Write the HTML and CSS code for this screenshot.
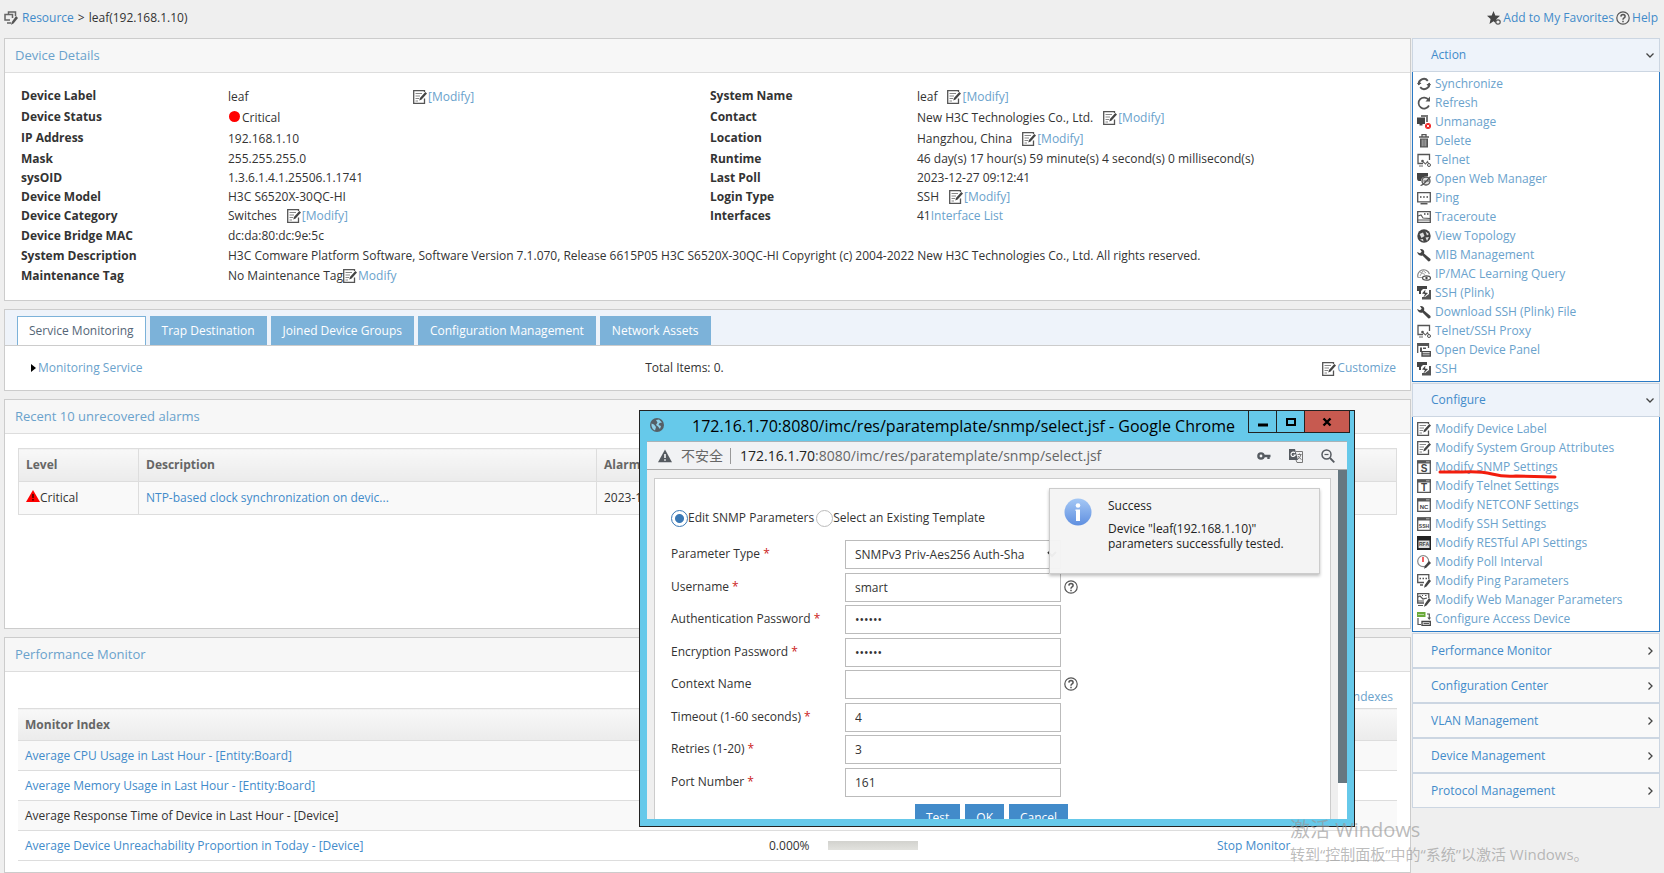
FILE: index.html
```html
<!DOCTYPE html>
<html lang="en">
<head>
    <meta charset="UTF-8">
    <meta name="viewport" content="width=device-width, initial-scale=1.0">
    <title>leaf(192.168.1.10)</title>
    <link rel="stylesheet" href="styles.css">
</head>
<body>
    <!-- icon sprite -->
    <svg class="sprite" aria-hidden="true">
        <symbol id="i-edit" viewBox="0 0 14 14">
            <path d="M11.5 8.5V13.3H.7V.7H11.5V2" fill="#fff" stroke="#555" stroke-width="1.3"/>
            <path d="M2.5 3.5H9M2.5 6H7M2.5 8.5H6M2.5 11H5" stroke="#888" stroke-width="1"/>
            <path d="M12.3 2L14 3.600L8.600 9.500L6.300 10.500L6.900 8Z" fill="#444"/>
        </symbol>
        <symbol id="i-res" viewBox="0 0 14 14">
            <path d="M4.500 3V1H11.500V5M6 9H1V3.500H8.500V7M3 12H7" fill="none" stroke="#666" stroke-width="1.500"/>
            <path d="M12 5L14 7L9.500 12.500L7 13.700L7.800 11Z" fill="#555"/>
        </symbol>
        <symbol id="i-star" viewBox="0 0 14 14">
            <path d="M6.500 0L8.300 4.400L13 4.800L9.500 8L8.500 12L6.500 10.300L2.500 13L3.600 8L0 4.800L4.700 4.400Z" fill="#444"/>
            <circle cx="11" cy="11" r="2.200" fill="#efefef" stroke="#555" stroke-width="1.200"/>
        </symbol>
        <symbol id="i-help" viewBox="0 0 14 14">
            <circle cx="7" cy="7" r="6.200" fill="none" stroke="#555" stroke-width="1.200"/>
            <path d="M4.900 5.600Q5 3.600 7 3.600Q9.100 3.700 9.100 5.400Q9 6.600 7.800 7.200Q7 7.700 7 8.700M7 9.800V11.200" fill="none" stroke="#555" stroke-width="1.500"/>
        </symbol>
        <symbol id="i-sync" viewBox="0 0 14 14">
            <path d="M2 8A5 5 0 0 1 10.800 3.800M12 6A5 5 0 0 1 3.200 10.200" fill="none" stroke="#555" stroke-width="1.900"/>
            <path d="M0 7H4.500L2 4ZM9.500 7H14L12 10.500Z" fill="#555"/>
        </symbol>
        <symbol id="i-refresh" viewBox="0 0 14 14">
            <path d="M11.500 3.800A5.500 5.500 0 1 0 12 9.500" fill="none" stroke="#555" stroke-width="1.700"/>
            <path d="M13 .5V5.500H8.500Z" fill="#555"/>
        </symbol>
        <symbol id="i-unmanage" viewBox="0 0 14 14">
            <path d="M4 2V0H11V7H9V2Z" fill="#777"/>
            <path d="M0 2.500H8V9H5.500V10.500H2.500V9H0Z" fill="#444"/>
            <circle cx="11" cy="11" r="3" fill="#e22"/>
            <path d="M9.800 9.800L12.200 12.200M12.200 9.800L9.800 12.200" stroke="#fff" stroke-width=".9"/>
        </symbol>
        <symbol id="i-delete" viewBox="0 0 14 14">
            <path d="M2 3H12M5 2.500V.7H9V2.500" fill="none" stroke="#555" stroke-width="1.300"/>
            <path d="M3 4.500H11V13.500H3Z" fill="#555"/>
            <path d="M5.200 5.500V12.300M7 5.500V12.300M8.800 5.500V12.300" stroke="#ddd" stroke-width=".7"/>
        </symbol>
        <symbol id="i-telnet" viewBox="0 0 14 14">
            <path d="M6 10.500H1V1.500H12.500V7" fill="none" stroke="#555" stroke-width="1.300"/>
            <path d="M2 13H6M5 8L8.500 11L10.500 8.500L12 11.500" fill="none" stroke="#666" stroke-width="1.100"/>
            <circle cx="5.500" cy="8" r="1.300" fill="#555"/>
            <circle cx="12" cy="12" r="1.500" fill="#fff" stroke="#555"/>
        </symbol>
        <symbol id="i-web" viewBox="0 0 14 14">
            <path d="M0 1H11V4Q4 4.500 4 9H2Q0 9 0 6Z" fill="#444"/>
            <circle cx="9" cy="9" r="4" fill="#ddd" stroke="#555" stroke-width="1.300"/>
            <path d="M3.500 13.500Q6 13.500 13.500 4.500M6.500 9H12" fill="none" stroke="#555" stroke-width="1.200"/>
        </symbol>
        <symbol id="i-ping" viewBox="0 0 14 14">
            <path d="M.7 1.700H13.300V10.800H.7Z" fill="#fff" stroke="#555" stroke-width="1.300"/>
            <path d="M3 6H4.500M6.200 6H7.700M9.500 6H11" stroke="#444" stroke-width="1.500"/>
            <path d="M3.500 12.700H10.500" stroke="#555" stroke-width="1.500"/>
        </symbol>
        <symbol id="i-trace" viewBox="0 0 14 14">
            <path d="M.7 1.700H13.300V12.300H.7Z" fill="#fff" stroke="#555" stroke-width="1.300"/>
            <path d="M1 6L4 5L6 8L13 8.500M1 10H13" fill="none" stroke="#555" stroke-width="1.100"/>
            <path d="M7 4H8.500M10 4H11.500" stroke="#444" stroke-width="1.500"/>
        </symbol>
        <symbol id="i-topo" viewBox="0 0 14 14">
            <circle cx="7" cy="7" r="6.700" fill="#444"/>
            <path d="M2.500 5L6 3.500L7.500 7L4.500 9ZM8.500 2.500L12 5L10 6.500ZM8.500 8.500L12 8L10 12ZM3 10.500L6 10L6.500 12.500Z" fill="#ddd"/>
        </symbol>
        <symbol id="i-wrench" viewBox="0 0 14 14">
            <path d="M3 1Q6.500 .5 7.300 3.700L7 5.500L13.500 11Q14 13.500 11.500 13.500L5.500 7.500Q1.500 8.500 0 4L3 5.300L4.700 3.800Z" fill="#444"/>
        </symbol>
        <symbol id="i-query" viewBox="0 0 14 14">
            <path d="M1 10.500A5.700 5.700 0 1 1 12.400 7" fill="none" stroke="#888" stroke-width="1.200"/>
            <path d="M3 9L6 3.500L9 6M3 5L8 7.500M1 10.500H5" fill="none" stroke="#999" stroke-width=".9"/>
            <ellipse cx="9.500" cy="11" rx="4" ry="2.200" fill="#fff" stroke="#555" stroke-width="1.200"/>
            <circle cx="9.500" cy="11" r="1.200" fill="#444"/>
        </symbol>
        <symbol id="i-ssh" viewBox="0 0 14 14">
            <path d="M0 0H10V3H6L4 5V8H2V5H0Z" fill="#444"/>
            <path d="M12 4H14V13.500H5V11H8L12 8Z" fill="#555"/>
            <path d="M8.500 3.500L5 7.500L8 8L6 12L11 7L8 6.500Z" fill="#444"/>
        </symbol>
        <symbol id="i-panel" viewBox="0 0 14 14">
            <path d="M.7 10V.7H11.500V5" fill="none" stroke="#555" stroke-width="1.300"/>
            <path d="M1 1H11V3H1ZM3 4.500H5V9H3ZM6 4.500H9V6H6Z" fill="#555"/>
            <path d="M5 8.700H13.300V13H5ZM5 10.800H13" fill="#fff" stroke="#444" stroke-width="1.300"/>
        </symbol>
        <symbol id="i-frame" viewBox="0 0 14 14">
            <path d="M.7 1V13.300H13.300V1Z" fill="#fff" stroke="#555" stroke-width="1.300"/>
            <path d="M0 .5H14V3.500H0Z" fill="#555"/>
            <path d="M9 1.800H12.500" stroke="#ccc" stroke-width=".8"/>
        </symbol>
        <symbol id="i-poll" viewBox="0 0 14 14">
            <circle cx="6.200" cy="6.200" r="5.500" fill="#fff" stroke="#888" stroke-width="1.200"/>
            <path d="M6 2V7" stroke="#e22" stroke-width="1.400"/>
            <path d="M12 6L14 8L9.500 12.500L7 13.700L7.800 11Z" fill="#444"/>
        </symbol>
        <symbol id="i-pinged" viewBox="0 0 14 14">
            <path d="M7 8.500H.7V.7H11.800V5" fill="none" stroke="#555" stroke-width="1.300"/>
            <path d="M2.500 4.500H4M5.500 4.500H7M8.500 4.500H10M3 11H6" stroke="#555" stroke-width="1.400"/>
            <path d="M12 5L14 7L9.500 12.500L7 13.700L7.800 11Z" fill="#444"/>
        </symbol>
        <symbol id="i-webed" viewBox="0 0 14 14">
            <path d="M7 10H.7V.7H11.800V5" fill="none" stroke="#555" stroke-width="1.300"/>
            <path d="M1 4L3 3L6 6L10 5M5 2.500H6M8 2.500H9.500M1 8H7M1 12.500H6" fill="none" stroke="#555" stroke-width="1.200"/>
            <path d="M12 5L14 7L9.500 12.500L7 13.700L7.800 11Z" fill="#444"/>
        </symbol>
        <symbol id="i-access" viewBox="0 0 14 14">
            <path d="M0 0H8.500V5H0Z" fill="#6aaa3a"/>
            <path d="M1.500 2.500H7" stroke="#fff" stroke-dasharray="1 1"/>
            <path d="M1 6V12.500H4M10 2H12.300V7" fill="none" stroke="#555" stroke-width="1.200"/>
            <path d="M10.300 5.500H14L12.300 8Z" fill="#555"/>
            <path d="M5 9.500H13.300V13.300H5Z" fill="#fff" stroke="#444" stroke-width="1.300"/>
            <path d="M6.500 11.500H12" stroke="#555" stroke-width="1.200"/>
        </symbol>
        <symbol id="i-down" viewBox="0 0 10 10"><path d="M1.500 3.500L5 7L8.500 3.500" fill="none" stroke="#444" stroke-width="1.300"/></symbol>
        <symbol id="i-right" viewBox="0 0 10 10"><path d="M3.500 1.500L7 5L3.500 8.500" fill="none" stroke="#444" stroke-width="1.300"/></symbol>
    </svg>

    <header class="topbar">
        <nav class="crumbs">
            <svg class="icon"><use href="#i-res"/></svg>
            <a href="#">Resource</a> <span>&gt;</span> <span>leaf(192.168.1.10)</span>
        </nav>
        <div class="toplinks">
            <a href="#"><svg class="icon"><use href="#i-star"/></svg>Add to My Favorites</a>
            <a href="#"><svg class="icon"><use href="#i-help"/></svg>Help</a>
        </div>
    </header>

    <div class="layout">
        <main class="main">
            <section class="panel">
                <h2 class="panel-title">Device Details</h2>
                <div class="details">
                    <dl class="props">
                        <dt>Device Label</dt><dd><span class="label-value">leaf</span><a href="#"><svg class="icon"><use href="#i-edit"/></svg>[Modify]</a></dd>
                        <dt>Device Status</dt><dd><span class="dot"></span>Critical</dd>
                        <dt>IP Address</dt><dd>192.168.1.10</dd>
                        <dt>Mask</dt><dd>255.255.255.0</dd>
                        <dt>sysOID</dt><dd>1.3.6.1.4.1.25506.1.1741</dd>
                        <dt>Device Model</dt><dd>H3C S6520X-30QC-HI</dd>
                        <dt>Device Category</dt><dd><span class="value">Switches</span><a href="#"><svg class="icon"><use href="#i-edit"/></svg>[Modify]</a></dd>
                        <dt>Device Bridge MAC</dt><dd>dc:da:80:dc:9e:5c</dd>
                        <dt>System Description</dt><dd>H3C Comware Platform Software, Software Version 7.1.070, Release 6615P05 H3C S6520X-30QC-HI Copyright (c) 2004-2022 New H3C Technologies Co., Ltd. All rights reserved.</dd>
                        <dt>Maintenance Tag</dt><dd>No Maintenance Tag<a href="#"><svg class="icon"><use href="#i-edit"/></svg>Modify</a></dd>
                    </dl>
                    <dl class="props">
                        <dt>System Name</dt><dd><span class="value">leaf</span><a href="#"><svg class="icon"><use href="#i-edit"/></svg>[Modify]</a></dd>
                        <dt>Contact</dt><dd><span class="value">New H3C Technologies Co., Ltd.</span><a href="#"><svg class="icon"><use href="#i-edit"/></svg>[Modify]</a></dd>
                        <dt>Location</dt><dd><span class="value">Hangzhou, China</span><a href="#"><svg class="icon"><use href="#i-edit"/></svg>[Modify]</a></dd>
                        <dt>Runtime</dt><dd>46 day(s) 17 hour(s) 59 minute(s) 4 second(s) 0 millisecond(s)</dd>
                        <dt>Last Poll</dt><dd>2023-12-27 09:12:41</dd>
                        <dt>Login Type</dt><dd><span class="value">SSH</span><a href="#"><svg class="icon"><use href="#i-edit"/></svg>[Modify]</a></dd>
                        <dt>Interfaces</dt><dd>41<a href="#">Interface List</a></dd>
                    </dl>
                </div>
            </section>

            <section class="panel">
                <div class="tabs">
                    <button class="tab active" type="button">Service Monitoring</button>
                    <button class="tab" type="button">Trap Destination</button>
                    <button class="tab" type="button">Joined Device Groups</button>
                    <button class="tab" type="button">Configuration Management</button>
                    <button class="tab" type="button">Network Assets</button>
                </div>
                <div class="service">
                    <a href="#"><span class="caret"></span>Monitoring Service</a>
                    <span>Total Items: 0.</span>
                    <a href="#"><svg class="icon"><use href="#i-edit"/></svg>Customize</a>
                </div>
            </section>

            <section class="panel alarms">
                <h2 class="panel-title">Recent 10 unrecovered alarms</h2>
                <table class="grid alarm-grid">
                    <thead>
                        <tr><th class="col-level">Level</th><th class="col-desc">Description</th><th>Alarmed At</th></tr>
                    </thead>
                    <tbody>
                        <tr>
                            <td><svg class="warn" viewBox="0 0 14 12"><path d="M7 0L14 12H0Z" fill="#f00"/><path d="M7 4V8M7 9V10.500" stroke="#400" stroke-width="1.500"/></svg>Critical</td>
                            <td><a href="#">NTP-based clock synchronization on devic...</a></td>
                            <td>2023-12-27</td>
                        </tr>
                    </tbody>
                </table>
            </section>

            <section class="panel monitor">
                <h2 class="panel-title">Performance Monitor</h2>
                <div class="monitor-tools"><a href="#">Add Indexes</a></div>
                <table class="grid">
                    <thead>
                        <tr><th class="col-index">Monitor Index</th><th class="col-value"></th><th></th><th class="col-op"></th></tr>
                    </thead>
                    <tbody>
                        <tr><td><a href="#">Average CPU Usage in Last Hour - [Entity:Board]</a></td><td></td><td></td><td></td></tr>
                        <tr><td><a href="#">Average Memory Usage in Last Hour - [Entity:Board]</a></td><td></td><td></td><td></td></tr>
                        <tr><td>Average Response Time of Device in Last Hour - [Device]</td><td></td><td></td><td></td></tr>
                        <tr><td><a href="#">Average Device Unreachability Proportion in Today - [Device]</a></td><td>0.000%</td><td><div class="bar"></div></td><td><a href="#">Stop Monitor</a></td></tr>
                    </tbody>
                </table>
            </section>
        </main>

        <aside class="side">
            <section class="menu">
                <button class="menu-head open" type="button">Action<svg class="arrow"><use href="#i-down"/></svg></button>
                <ul class="menu-list">
                    <li><a href="#"><svg class="icon"><use href="#i-sync"/></svg>Synchronize</a></li>
                    <li><a href="#"><svg class="icon"><use href="#i-refresh"/></svg>Refresh</a></li>
                    <li><a href="#"><svg class="icon"><use href="#i-unmanage"/></svg>Unmanage</a></li>
                    <li><a href="#"><svg class="icon"><use href="#i-delete"/></svg>Delete</a></li>
                    <li><a href="#"><svg class="icon"><use href="#i-telnet"/></svg>Telnet</a></li>
                    <li><a href="#"><svg class="icon"><use href="#i-web"/></svg>Open Web Manager</a></li>
                    <li><a href="#"><svg class="icon"><use href="#i-ping"/></svg>Ping</a></li>
                    <li><a href="#"><svg class="icon"><use href="#i-trace"/></svg>Traceroute</a></li>
                    <li><a href="#"><svg class="icon"><use href="#i-topo"/></svg>View Topology</a></li>
                    <li><a href="#"><svg class="icon"><use href="#i-wrench"/></svg>MIB Management</a></li>
                    <li><a href="#"><svg class="icon"><use href="#i-query"/></svg>IP/MAC Learning Query</a></li>
                    <li><a href="#"><svg class="icon"><use href="#i-ssh"/></svg>SSH (Plink)</a></li>
                    <li><a href="#"><svg class="icon"><use href="#i-wrench"/></svg>Download SSH (Plink) File</a></li>
                    <li><a href="#"><svg class="icon"><use href="#i-telnet"/></svg>Telnet/SSH Proxy</a></li>
                    <li><a href="#"><svg class="icon"><use href="#i-panel"/></svg>Open Device Panel</a></li>
                    <li><a href="#"><svg class="icon"><use href="#i-ssh"/></svg>SSH</a></li>
                </ul>
            </section>
            <section class="menu">
                <button class="menu-head open" type="button">Configure<svg class="arrow"><use href="#i-down"/></svg></button>
                <ul class="menu-list">
                    <li><a href="#"><svg class="icon"><use href="#i-edit"/></svg>Modify Device Label</a></li>
                    <li><a href="#"><svg class="icon"><use href="#i-edit"/></svg>Modify System Group Attributes</a></li>
                    <li class="marked">
                        <a href="#"><svg class="icon" viewBox="0 0 14 14"><use href="#i-frame"/><text class="glyph" x="7" y="12" font-size="10">S</text></svg>Modify SNMP Settings</a>
                        <svg class="mark" viewBox="0 0 120 10"><path d="M2 3H24Q42 2 54 5T78 7L117 8" fill="none" stroke="#f21d0d" stroke-width="3" stroke-linecap="round"/></svg>
                    </li>
                    <li><a href="#"><svg class="icon" viewBox="0 0 14 14"><use href="#i-frame"/><text class="glyph" x="7" y="12" font-size="10">T</text></svg>Modify Telnet Settings</a></li>
                    <li><a href="#"><svg class="icon" viewBox="0 0 14 14"><use href="#i-frame"/><text class="glyph" x="7" y="11" font-size="6">NC</text></svg>Modify NETCONF Settings</a></li>
                    <li><a href="#"><svg class="icon" viewBox="0 0 14 14"><use href="#i-frame"/><text class="glyph" x="7" y="11" font-size="5">SSH</text></svg>Modify SSH Settings</a></li>
                    <li><a href="#"><svg class="icon" viewBox="0 0 14 14"><path d="M0 0H14V14H0Z" fill="#222"/><path d="M1.500 4.500H12.500V12H1.500Z" fill="#ddd"/><text class="glyph" x="7" y="10" font-size="5">RFA</text></svg>Modify RESTful API Settings</a></li>
                    <li><a href="#"><svg class="icon"><use href="#i-poll"/></svg>Modify Poll Interval</a></li>
                    <li><a href="#"><svg class="icon"><use href="#i-pinged"/></svg>Modify Ping Parameters</a></li>
                    <li><a href="#"><svg class="icon"><use href="#i-webed"/></svg>Modify Web Manager Parameters</a></li>
                    <li><a href="#"><svg class="icon"><use href="#i-access"/></svg>Configure Access Device</a></li>
                </ul>
            </section>
            <button class="menu-head" type="button">Performance Monitor<svg class="arrow"><use href="#i-right"/></svg></button>
            <button class="menu-head" type="button">Configuration Center<svg class="arrow"><use href="#i-right"/></svg></button>
            <button class="menu-head" type="button">VLAN Management<svg class="arrow"><use href="#i-right"/></svg></button>
            <button class="menu-head" type="button">Device Management<svg class="arrow"><use href="#i-right"/></svg></button>
            <button class="menu-head" type="button">Protocol Management<svg class="arrow"><use href="#i-right"/></svg></button>
        </aside>
    </div>

    <!-- SNMP popup window -->
    <div class="window">
        <div class="titlebar">
            <svg class="globe" viewBox="0 0 14 14"><circle cx="7" cy="7" r="7" fill="#555f66"/><path d="M1.500 5.500L4 6.500L6 9L5 12.500Q2 11 1.500 8ZM6 2L9 1.500L12 4.500L9.500 5L8.500 7L11 8L10 11L8 8.500L6 7L7.500 4.500Z" fill="#8fd0e8"/></svg>
            <span class="window-title">172.16.1.70:8080/imc/res/paratemplate/snmp/select.jsf - Google Chrome</span>
            <div class="window-buttons">
                <button type="button" aria-label="Minimize"><svg viewBox="0 0 12 12"><path d="M1 9H11" stroke="#000" stroke-width="3"/></svg></button>
                <button type="button" aria-label="Maximize"><svg viewBox="0 0 12 12"><path d="M2 3H10V9H2Z" fill="none" stroke="#000" stroke-width="2"/></svg></button>
                <button type="button" class="close" aria-label="Close"><svg viewBox="0 0 12 12"><path d="M2.500 2.500L9.500 9.500M9.500 2.500L2.500 9.500" stroke="#000" stroke-width="2.400"/></svg></button>
            </div>
        </div>
        <div class="window-frame">
            <div class="address">
                <svg class="addr-icon" viewBox="0 0 14 14"><path d="M7 .5L14 13.300H0Z" fill="#555a60"/><path d="M7 5V9M7 10.300V11.800" stroke="#fff" stroke-width="1.500"/></svg>
                <span class="insecure">不安全</span>
                <span class="url"><b>172.16.1.70</b>:8080/imc/res/paratemplate/snmp/select.jsf</span>
                <svg class="addr-icon" viewBox="0 0 14 14"><circle cx="4" cy="7" r="2.600" fill="none" stroke="#555a60" stroke-width="2.400"/><path d="M6 7H13.500M11.500 7V10" stroke="#555a60" stroke-width="2.400"/></svg>
                <svg class="addr-icon" viewBox="0 0 14 14"><path d="M0 0H6L9 11H0Z" fill="#555a60"/><path d="M7 2.500H13.500V13.500H8L7 11" fill="none" stroke="#777" stroke-width="1"/><path d="M6 4A2.200 2.200 0 1 0 6.300 6H4.500" fill="none" stroke="#fff" stroke-width="1.100"/><path d="M8.500 5.500H12.500M10.500 4.500V5.500M12 5.500Q11 9 9 10M9 7Q10 9 12.500 10.500" fill="none" stroke="#777" stroke-width="1"/></svg>
                <svg class="addr-icon" viewBox="0 0 14 14"><circle cx="5.500" cy="5.500" r="4.500" fill="none" stroke="#555a60" stroke-width="1.500"/><path d="M9 9L13.300 13.300" stroke="#555a60" stroke-width="1.800"/><path d="M3.500 5.500H7.500" stroke="#555a60" stroke-width="1.200"/></svg>
            </div>
            <div class="viewport">
                <form class="snmp">
                    <div class="modes">
                        <label><input type="radio" name="mode" checked>Edit SNMP Parameters</label>
                        <label><input type="radio" name="mode">Select an Existing Template</label>
                    </div>
                    <div class="fields">
                        <label for="type">Parameter Type <em>*</em></label>
                        <select id="type"><option>SNMPv3 Priv-Aes256 Auth-Sha</option></select>
                        <span></span>
                        <label for="user">Username <em>*</em></label>
                        <input id="user" type="text" value="smart">
                        <svg class="icon"><use href="#i-help"/></svg>
                        <label for="auth">Authentication Password <em>*</em></label>
                        <input id="auth" type="password" value="secret">
                        <span></span>
                        <label for="enc">Encryption Password <em>*</em></label>
                        <input id="enc" type="password" value="secret">
                        <span></span>
                        <label for="ctx">Context Name</label>
                        <input id="ctx" type="text">
                        <svg class="icon"><use href="#i-help"/></svg>
                        <label for="timeout">Timeout (1-60 seconds) <em>*</em></label>
                        <input id="timeout" type="text" value="4">
                        <span></span>
                        <label for="retries">Retries (1-20) <em>*</em></label>
                        <input id="retries" type="text" value="3">
                        <span></span>
                        <label for="port">Port Number <em>*</em></label>
                        <input id="port" type="text" value="161">
                        <span></span>
                    </div>
                    <div class="actions">
                        <button type="button">Test</button>
                        <button type="button">OK</button>
                        <button type="button">Cancel</button>
                    </div>
                </form>
                <div class="scrollbar"><div class="thumb"></div></div>
                <div class="toast">
                    <svg class="info" viewBox="0 0 28 28">
                        <defs><linearGradient id="g" x1="0" y1="0" x2="0" y2="1"><stop offset="0" stop-color="#a5c8f5"/><stop offset="1" stop-color="#5f8fe0"/></linearGradient></defs>
                        <circle cx="14" cy="14" r="13.500" fill="url(#g)"/>
                        <circle cx="14" cy="7.500" r="2.300" fill="#fff"/>
                        <path d="M11.500 11.500H16V23H12V13H11.500Z" fill="#fff"/>
                    </svg>
                    <div>
                        <p class="toast-title">Success</p>
                        <p>Device "leaf(192.168.1.10)" parameters successfully tested.</p>
                    </div>
                </div>
            </div>
        </div>
    </div>

    <div class="watermark">
        <p class="watermark-title">激活 Windows</p>
        <p>转到“控制面板”中的“系统”以激活 Windows。</p>
    </div>
</body>
</html>
```
FILE: styles.css
```css
* {
    box-sizing: border-box;
}
html, body {
    height: 100%;
}
body {
    margin: 0;
    background: #efefef;
    color: #333;
    font-family: "Open Sans", "Noto Sans CJK SC", sans-serif;
    font-size: 12px;
    line-height: 20px;
    overflow: hidden;
    display: flex;
    flex-direction: column;
}
a {
    color: #428bca;
    text-decoration: none;
}
button, input, select {
    font: inherit;
    color: inherit;
}
p, h2, dl, dd, ul {
    margin: 0;
    padding: 0;
}
.sprite {
    display: none;
}
.icon {
    width: 14px;
    height: 14px;
    flex: none;
    vertical-align: middle;
}
.topbar {
    height: 38px;
    padding: 0 6px 2px 4px;
    display: flex;
    flex: none;
    align-items: center;
    justify-content: space-between;
}
.crumbs, .toplinks, .toplinks a {
    display: flex;
    align-items: center;
}
.crumbs {
    gap: 4px;
}
.toplinks {
    gap: 2px;
}
.toplinks .icon {
    margin-right: 2px;
}
.layout {
    flex: 1;
    min-height: 0;
    display: flex;
}

/* main column */
.main {
    flex: 1;
    min-width: 0;
    display: flex;
    flex-direction: column;
    gap: 8px;
    padding-left: 4px;
}
.panel {
    background: #fff;
    border: 1px solid #ccc;
    flex: none;
}
.panel-title {
    height: 34px;
    padding: 0 10px;
    background: #f7f7f7;
    border-bottom: 1px solid #ddd;
    color: #6aa2cc;
    font-size: 13px;
    font-weight: normal;
    line-height: 32px;
}
.details {
    display: grid;
    grid-template-columns: minmax(0, 1fr) minmax(0, 1fr);
    padding: 13px 11px 14px 16px;
}
.props {
    display: grid;
    grid-template-columns: 207px 1fr;
    grid-template-rows: repeat(3, 21px) repeat(3, 19px);
    grid-auto-rows: 20px;
}
.props dt {
    font-weight: bold;
}
.props dd {
    display: flex;
    align-items: center;
    min-width: 0;
    white-space: nowrap;
}
.props a, .service a, .monitor-tools a {
    color: #6aa2cc;
}
.props a {
    display: flex;
    align-items: center;
}
.props .icon, .service .icon {
    margin-right: 1px;
}
.value {
    margin-right: 10px;
}
.label-value {
    width: 185px;
}
.dot {
    width: 11px;
    height: 11px;
    margin: 0 2px 2px 1px;
    border-radius: 50%;
    background: #f00;
}
.tabs {
    display: flex;
    gap: 4px;
    padding: 6px 12px 0;
    background: #eef3fa;
    border-bottom: 1px solid #ccc;
}
.tab {
    height: 29px;
    padding: 0 11px;
    border: 1px solid #7cb2d9;
    border-bottom: 0;
    background: #7cb2d9;
    color: #fff;
}
.tab.active {
    background: #fff;
    color: #567;
}
.service {
    display: grid;
    grid-template-columns: 45% 1fr auto;
    padding: 12px 14px 12px 26px;
}
.caret {
    display: inline-block;
    border: 4px solid transparent;
    border-left: 5px solid #000;
    border-right: 0;
    margin-right: 2px;
}
.grid {
    width: calc(100% - 26px);
    margin: 0 13px;
    border-collapse: collapse;
    table-layout: fixed;
}
.grid th {
    height: 32px;
    padding: 0 7px;
    text-align: left;
    color: #666;
    background: linear-gradient(#f8f8f8, #ebebeb);
    border-top: 1px solid #ddd;
    border-bottom: 1px solid #ddd;
}
.grid td {
    height: 30px;
    padding: 0 7px;
    border-bottom: 1px solid #ddd;
}
.grid tbody tr:nth-child(odd) {
    background: #f9f9f9;
}
.alarms {
    height: 230px;
}
.alarm-grid {
    margin-top: 14px;
}
.alarm-grid th, .alarm-grid td {
    height: 33px;
    border: 1px solid #ddd;
}
.col-level {
    width: 120px;
}
.col-desc {
    width: 458px;
}
.warn {
    width: 14px;
    height: 12px;
}
.monitor {
    flex: 1;
}
.monitor-tools {
    padding: 15px 17px 1px;
    text-align: right;
}
.col-index {
    width: 744px;
}
.col-value {
    width: 59px;
}
.col-op {
    width: 187px;
}
.bar {
    width: 90px;
    height: 9px;
    background: linear-gradient(#d2d2ce, #e2e2de);
}

/* right column */
.side {
    width: 248px;
    margin: 0 4px 0 1px;
    flex: none;
}
.menu {
    margin-bottom: 1px;
}
.menu-head {
    display: flex;
    align-items: center;
    justify-content: space-between;
    width: 100%;
    height: 35px;
    padding: 0 4px 0 18px;
    border: 1px solid #ccd6e2;
    background: #f9f9f9;
    color: #428bca;
    text-align: left;
}
.menu-head.open {
    height: 34px;
    background: #eef3fa;
}
.arrow {
    width: 10px;
    height: 10px;
}
.menu-list {
    list-style: none;
    padding: 2px 4px 3px;
    background: #fff;
    border: 1px solid #2a7ac6;
    border-top: 0;
}
.menu-list a {
    display: flex;
    align-items: center;
    gap: 4px;
    height: 19px;
    color: #6aa2cc;
}
.marked {
    position: relative;
}
.mark {
    position: absolute;
    left: 21px;
    top: 12px;
    width: 120px;
    height: 10px;
}
.glyph {
    font-family: "Liberation Sans", sans-serif;
    font-weight: bold;
    fill: #444;
    text-anchor: middle;
}

/* popup window */
.window {
    position: absolute;
    left: 639px;
    top: 410px;
    width: 716px;
    height: 417px;
    display: flex;
    flex-direction: column;
    border: 1px solid #222;
    background: #66c9ea;
}
.titlebar {
    display: flex;
    align-items: flex-start;
    height: 30px;
    padding: 0 4px 0 10px;
}
.globe {
    width: 14px;
    height: 14px;
    margin-top: 7px;
}
.window-title {
    flex: 1;
    margin-left: 28px;
    color: #000;
    font-size: 16px;
    line-height: 30px;
    white-space: nowrap;
}
.window-buttons {
    display: flex;
}
.window-buttons button {
    width: 28px;
    height: 22px;
    padding: 0;
    border: 1px solid #222;
    border-top: 0;
    border-right: 0;
    background: #66c9ea;
    line-height: 0;
}
.window-buttons svg {
    width: 12px;
    height: 12px;
}
.window-buttons .close {
    width: 46px;
    border-right: 1px solid #222;
    background: #c75a50;
}
.window-frame {
    flex: 1;
    min-height: 0;
    display: flex;
    flex-direction: column;
    margin: 0 7px 7px;
}
.address {
    display: flex;
    align-items: center;
    gap: 18px;
    height: 29px;
    padding: 0 12px 0 11px;
    background: #f1f2f4;
    border-top: 1px solid #a9b3b8;
    border-bottom: 1px solid #aaa;
    color: #666;
    font-size: 14px;
}
.addr-icon {
    width: 14px;
    height: 14px;
    flex: none;
}
.insecure {
    margin-left: -9px;
    padding-right: 7px;
    border-right: 1px solid #999;
    line-height: 16px;
}
.url {
    flex: 1;
    margin-left: -9px;
}
.url b {
    color: #222;
    font-weight: normal;
}
.viewport {
    position: relative;
    flex: 1;
    min-height: 0;
    display: flex;
    overflow: hidden;
    background: #efefef;
}
.snmp {
    flex: 1;
    margin: 8px 7px 0;
    padding: 29px 16px 0;
    height: 500px;
    background: #fff;
    border: 1px solid #ccc;
}
.modes {
    display: flex;
    gap: 2px;
    height: 32px;
}
.modes label {
    display: flex;
    align-items: center;
    height: 20px;
}
.modes input {
    appearance: none;
    width: 17px;
    height: 17px;
    margin: 0;
    border: 1px solid #bbb;
    border-radius: 50%;
}
.modes input:checked {
    border-color: #3a78b5;
    background: radial-gradient(#3a78b5 4px, #fff 5px);
}
.fields {
    display: grid;
    grid-template-columns: 171px 216px 14px;
    grid-auto-rows: 1fr;
    column-gap: 3px;
    height: 260px;
}
.fields label {
    line-height: 28px;
}
.fields em {
    color: #c22;
    font-style: normal;
}
.fields input, .fields select {
    width: 100%;
    height: 29px;
    padding: 0 9px;
    border: 1px solid #bbb;
    border-radius: 0;
    background: #fff;
}
.fields select {
    padding: 0 5px;
}
.fields .icon {
    margin-top: 7px;
}
.actions {
    display: flex;
    gap: 5px;
    padding: 4px 0 0 244px;
}
.actions button {
    height: 28px;
    padding: 0 11px;
    border: 0;
    background: #428bca;
    color: #fff;
}
.scrollbar {
    width: 9px;
    background: #fff;
}
.thumb {
    height: 313px;
    background: #667780;
}
.toast {
    position: absolute;
    top: 18px;
    right: 27px;
    width: 271px;
    height: 86px;
    padding: 9px 14px;
    display: flex;
    gap: 16px;
    background: rgba(244, 244, 244, .96);
    border: 1px solid #ccc;
    box-shadow: 0 2px 3px rgba(0, 0, 0, .25);
    color: #222;
    line-height: 15px;
}
.toast-title {
    margin-bottom: 8px;
}
.info {
    width: 28px;
    height: 28px;
    flex: none;
}

.watermark {
    position: absolute;
    left: 1290px;
    top: 816px;
    color: rgba(150, 150, 150, .65);
    font-size: 15px;
    line-height: 20px;
}
.watermark-title {
    font-size: 20px;
    line-height: 28px;
}
```
